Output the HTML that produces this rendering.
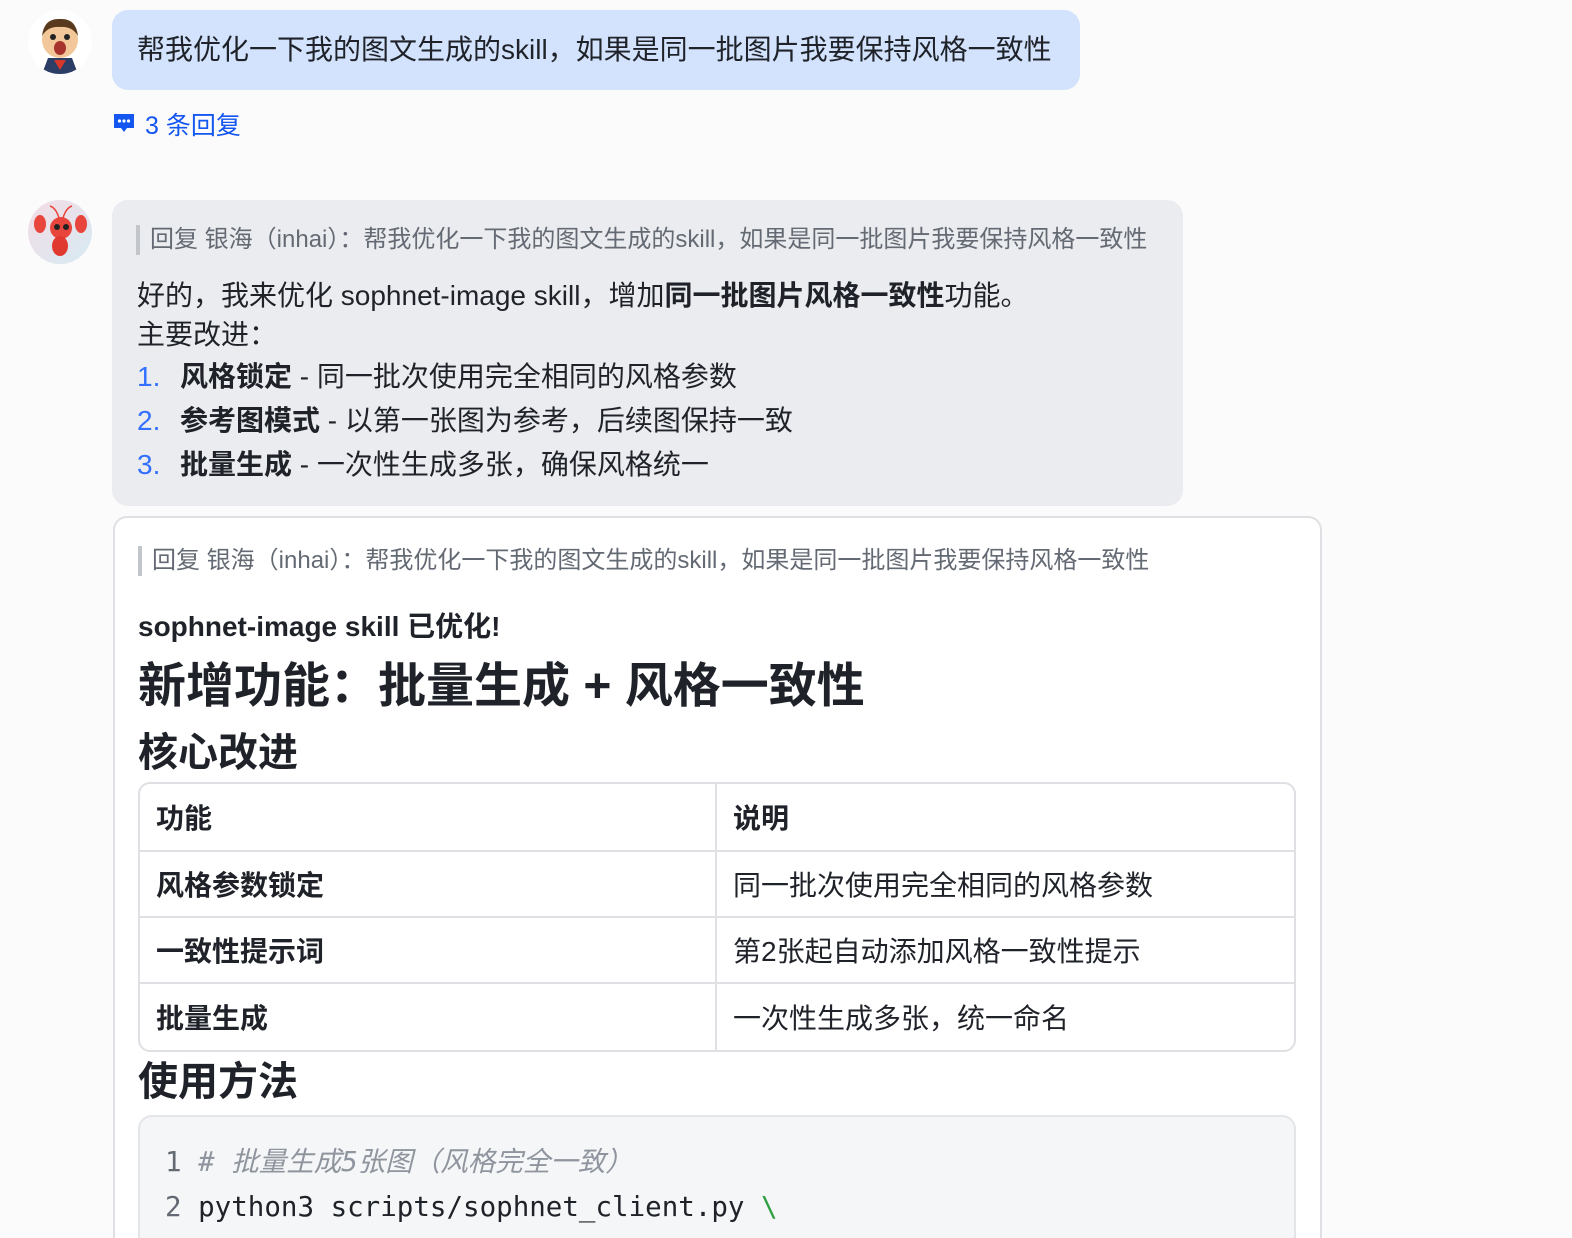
<!DOCTYPE html>
<html style="width:1572px;height:1238px;overflow:hidden"><head><meta charset="utf-8"><style>
*{margin:0;padding:0;box-sizing:border-box}
html{overflow:hidden}
body{width:1572px;height:1238px;overflow:hidden;background:#fbfbfc;font-family:"Liberation Sans","Noto Sans CJK SC",sans-serif;color:#1f2329;position:relative}
.a{position:absolute;white-space:nowrap}
.av{position:absolute;width:64px;height:64px;border-radius:50%;overflow:hidden}
.q{font-size:24px;color:#646a73;line-height:30px;padding-left:10px;border-left:4px solid #c2c5ca}
.t{font-size:28px;line-height:36px}
b{font-weight:700}
.n{color:#3370ff;display:inline-block;width:43px}
table{border-collapse:separate;border-spacing:0;width:1158px;border:2px solid #dee0e3;border-radius:12px;overflow:hidden;font-size:28px}
td{border-bottom:2px solid #dee0e3;padding:0 16px;height:66px;width:50%}
td:first-child{border-right:2px solid #dee0e3;font-weight:700}
tr:last-child td{border-bottom:none}
tr:first-child td{height:68px;font-weight:700}
.mono{font-family:"DejaVu Sans Mono","Liberation Mono","Noto Sans CJK SC",monospace;font-size:27.5px}
</style></head><body>
<div class="av" style="left:28px;top:10px;background:#fff">
<svg width="64" height="64"><circle cx="32" cy="30" r="18" fill="#f2c89b"/><path d="M14 26 Q16 8 32 9 Q48 8 50 26 Q44 16 32 17 Q20 16 14 26Z" fill="#5a3a1e"/><ellipse cx="32" cy="38" rx="6" ry="7" fill="#a8322c"/><circle cx="25" cy="27" r="3" fill="#222"/><circle cx="39" cy="27" r="3" fill="#222"/><path d="M14 64 L20 48 L44 48 L50 64Z" fill="#2d3e66"/><path d="M26 50 L32 60 L38 50Z" fill="#d4372c"/></svg></div>
<div class="a" style="left:112px;top:10px;width:968px;height:80px;background:#d3e3fd;border-radius:16px"></div>
<div class="a" style="left:137px;top:32px;font-size:28px;line-height:36px">帮我优化一下我的图文生成的skill，如果是同一批图片我要保持风格一致性</div>
<svg class="a" style="left:112px;top:111px" width="24" height="24" viewBox="0 0 24 24"><path d="M2 3 H22 V17 H15 L12 21 L9 17 H2Z" fill="#1456f0"/><circle cx="7.5" cy="10" r="1.6" fill="#fff"/><circle cx="12" cy="10" r="1.6" fill="#fff"/><circle cx="16.5" cy="10" r="1.6" fill="#fff"/></svg>
<div class="a" style="left:145px;top:106px;font-size:25px;color:#1456f0">3 条回复</div>

<div class="av" style="left:28px;top:200px;background:linear-gradient(135deg,#f5dbe4,#d6ebf3)">
<svg width="64" height="64"><circle cx="33" cy="28" r="11" fill="#e8453c"/><ellipse cx="32" cy="46" rx="8" ry="10" fill="#e0392f"/><ellipse cx="12" cy="24" rx="6" ry="9" fill="#e8453c"/><ellipse cx="53" cy="24" rx="6" ry="9" fill="#e8453c"/><circle cx="29" cy="27" r="3" fill="#222"/><circle cx="38" cy="27" r="3" fill="#222"/><path d="M31 18 Q28 8 22 6 M35 18 Q38 8 44 6" stroke="#e8453c" stroke-width="1.5" fill="none"/></svg></div>
<div class="a" style="left:112px;top:200px;width:1071px;height:306px;background:#ebecef;border-radius:16px"></div>
<div class="a q" style="left:136px;top:225px">回复 银海（inhai）：帮我优化一下我的图文生成的skill，如果是同一批图片我要保持风格一致性</div>
<div class="a t" style="left:137px;top:278px">好的，我来优化 sophnet-image skill，增加<b>同一批图片风格一致性</b>功能。</div>
<div class="a t" style="left:137px;top:317px">主要改进：</div>
<div class="a t" style="left:137px;top:359px"><span class="n">1.</span><b>风格锁定</b> - 同一批次使用完全相同的风格参数</div>
<div class="a t" style="left:137px;top:403px"><span class="n">2.</span><b>参考图模式</b> - 以第一张图为参考，后续图保持一致</div>
<div class="a t" style="left:137px;top:447px"><span class="n">3.</span><b>批量生成</b> - 一次性生成多张，确保风格统一</div>

<div class="a" style="left:113px;top:516px;width:1209px;height:740px;background:#fff;border:2px solid #dee0e3;border-radius:14px"></div>
<div class="a q" style="left:138px;top:546px">回复 银海（inhai）：帮我优化一下我的图文生成的skill，如果是同一批图片我要保持风格一致性</div>
<div class="a" style="left:138px;top:609px;font-size:28px;font-weight:700;line-height:36px">sophnet-image skill 已优化!</div>
<div class="a" style="left:138px;top:657px;font-size:48px;font-weight:700;line-height:60px">新增功能：批量生成 + 风格一致性</div>
<div class="a" style="left:138px;top:728px;font-size:40px;font-weight:700;line-height:50px">核心改进</div>
<div class="a" style="left:138px;top:782px"><table>
<tr><td>功能</td><td>说明</td></tr>
<tr><td>风格参数锁定</td><td>同一批次使用完全相同的风格参数</td></tr>
<tr><td>一致性提示词</td><td>第2张起自动添加风格一致性提示</td></tr>
<tr><td>批量生成</td><td>一次性生成多张，统一命名</td></tr>
</table></div>
<div class="a" style="left:138px;top:1057px;font-size:40px;font-weight:700;line-height:50px">使用方法</div>
<div class="a" style="left:138px;top:1115px;width:1158px;height:140px;background:#f5f6f7;border:2px solid #e4e5e8;border-radius:14px"></div>
<div class="a mono" style="left:165px;top:1145px;line-height:34px;color:#8f959e"><span style="color:#646a73">1</span> <i># 批量生成5张图（风格完全一致）</i></div>
<div class="a mono" style="left:165px;top:1190px;line-height:34px;color:#1f2329"><span style="color:#646a73">2</span> python3 scripts/sophnet_client.py <span style="color:#2ea043">\</span></div>
</body></html>
